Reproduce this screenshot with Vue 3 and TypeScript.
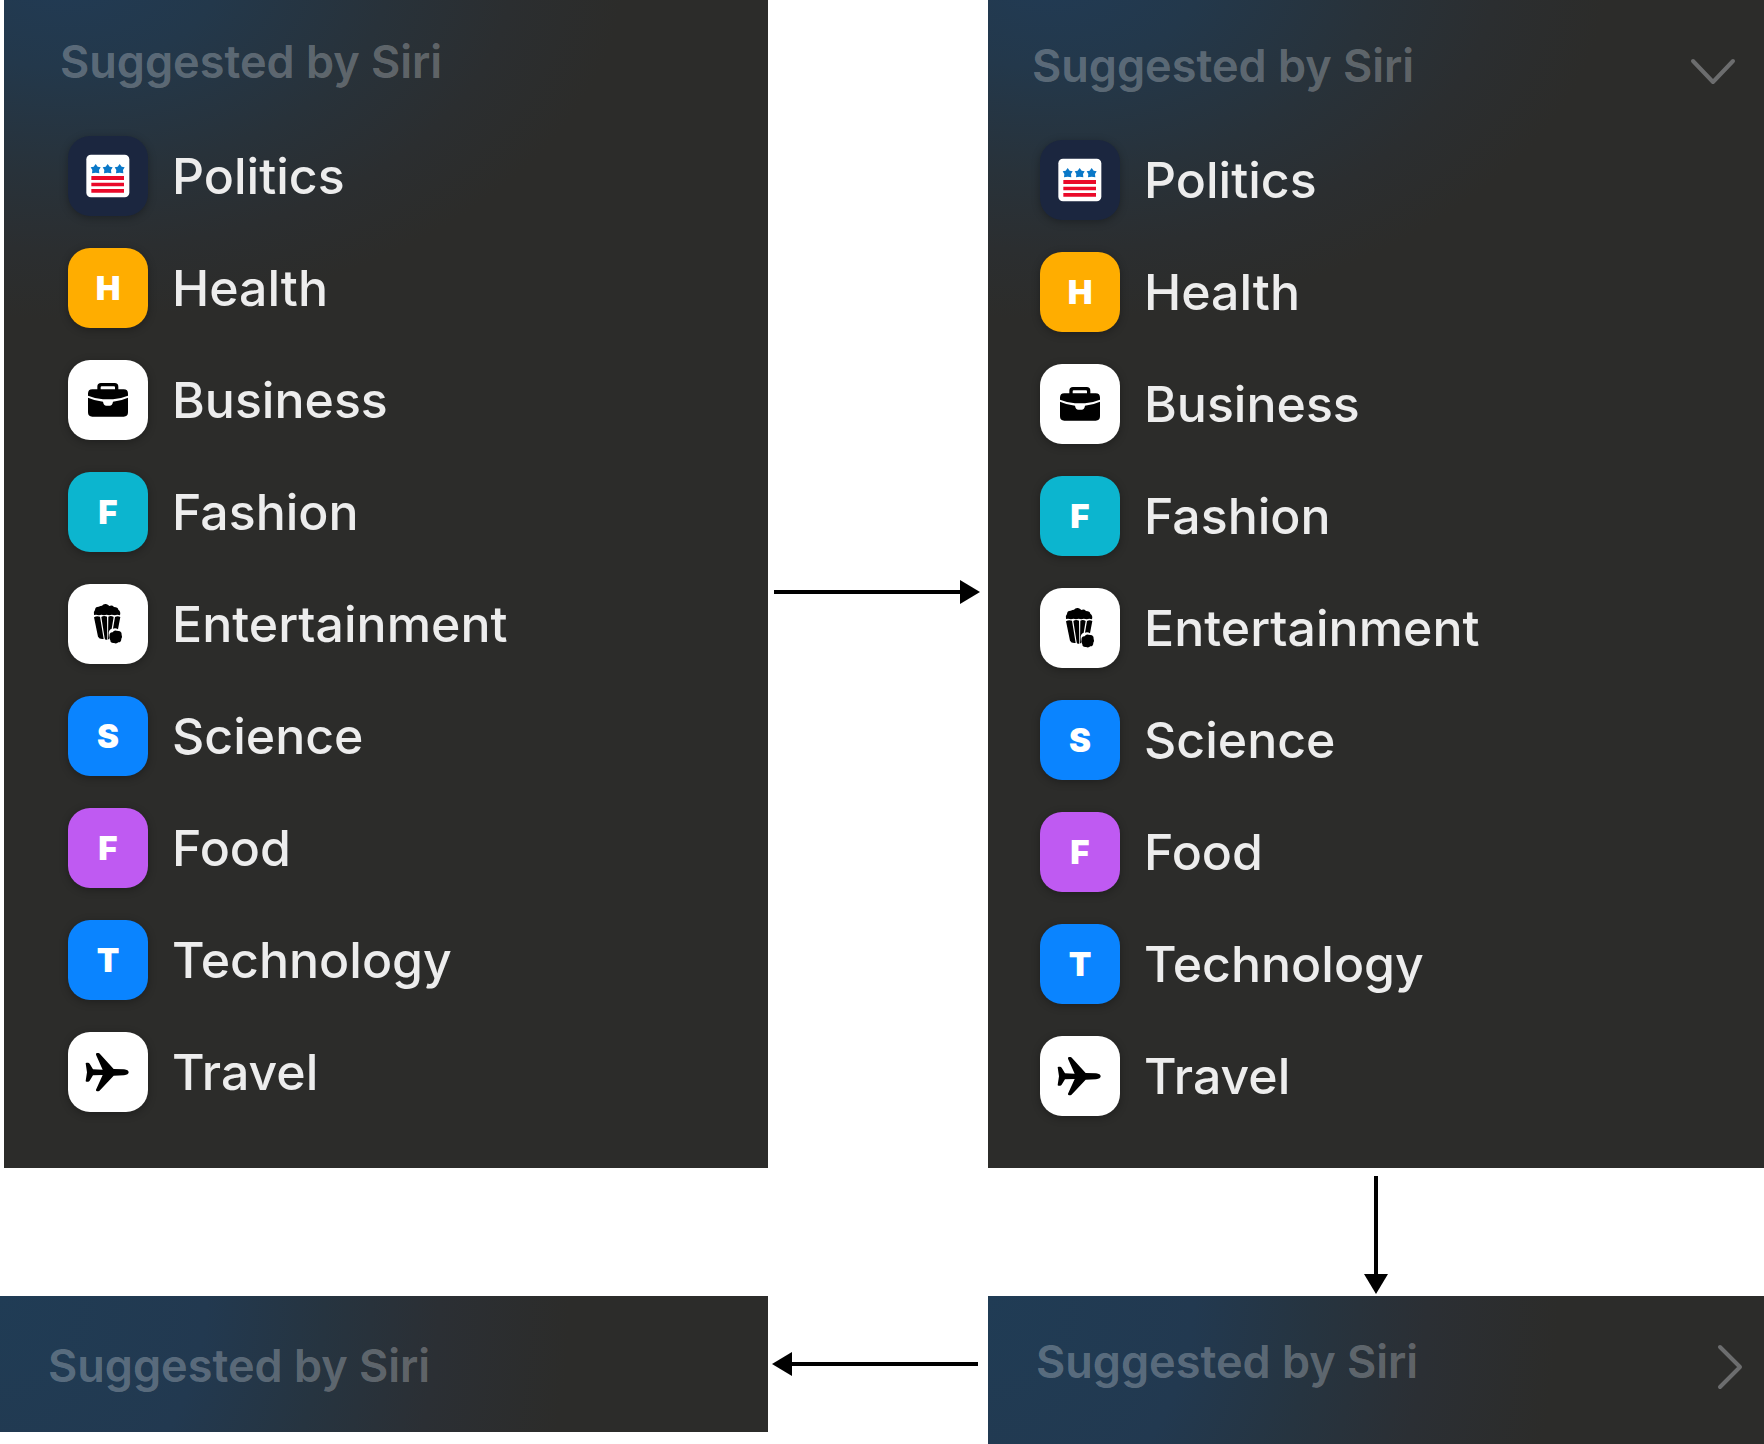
<script setup lang="ts">
import { ref } from 'vue'

interface Topic {
  name: string
  color: string
  letter?: string
  icon?: 'flag' | 'briefcase' | 'popcorn' | 'plane'
}

interface Panel {
  id: string
  open: boolean
  chevron?: 'down' | 'right'
}

const topics: Topic[] = [
  { name: 'Politics', color: '#1b263f', icon: 'flag' },
  { name: 'Health', color: '#ffad00', letter: 'H' },
  { name: 'Business', color: '#ffffff', icon: 'briefcase' },
  { name: 'Fashion', color: '#0cb5cf', letter: 'F' },
  { name: 'Entertainment', color: '#ffffff', icon: 'popcorn' },
  { name: 'Science', color: '#0a84ff', letter: 'S' },
  { name: 'Food', color: '#bf5af2', letter: 'F' },
  { name: 'Technology', color: '#0a84ff', letter: 'T' },
  { name: 'Travel', color: '#ffffff', icon: 'plane' },
]

const panels = ref<Panel[]>([
  { id: 'open-idle', open: true },
  { id: 'open-hover', open: true, chevron: 'down' },
  { id: 'closed-idle', open: false },
  { id: 'closed-hover', open: false, chevron: 'right' },
])
</script>

<template>
  <main class="board">
    <section
      v-for="panel in panels"
      :key="panel.id"
      class="panel"
      :class="[panel.id, { closed: !panel.open }]"
    >
      <header class="head">
        <h2 class="title">Suggested by Siri</h2>
        <button
          v-if="panel.chevron"
          class="toggle"
          type="button"
          :aria-expanded="panel.open"
          aria-label="Toggle suggestions"
        >
          <svg v-if="panel.chevron === 'down'" width="46" height="28" viewBox="0 0 46 28">
            <path d="M3 4 23 25 43 4" />
          </svg>
          <svg v-else width="28" height="48" viewBox="0 0 28 48">
            <path d="M4 4 24 24 4 44" />
          </svg>
        </button>
      </header>

      <ul v-if="panel.open" class="topics">
        <li v-for="topic in topics" :key="topic.name">
          <a class="topic" href="#">
            <span class="tile" :style="{ background: topic.color }">
              <template v-if="topic.letter">{{ topic.letter }}</template>
              <svg v-else viewBox="0 0 240 240" aria-hidden="true">
                <g v-if="topic.icon === 'flag'">
                  <rect x="55" y="56" width="129" height="128" rx="14" fill="#fff" />
                  <path
                    v-for="x in [83, 119, 155]"
                    :key="x"
                    :transform="`translate(${x} 99)`"
                    d="M0-15 6-7 15-5 10 3 11 13 0 11-11 13-10 3-15-5-6-7Z"
                    fill="#0a78c8"
                  />
                  <path d="M70 120h98v12H70zM70 140h98v11H70zM70 159h98v11H70z" fill="#ea0a2a" />
                </g>
                <g v-else-if="topic.icon === 'briefcase'">
                  <path
                    fill-rule="evenodd"
                    d="M60 107V101Q60 88 73 88H88V80Q88 69 99 69H140Q151 69 151 80V88H167Q180 88 180 101V107Q158 116 135 118H105Q82 116 60 107ZM98 88H141V82Q141 79 138 79H101Q98 79 98 82Z"
                  />
                  <path d="M60 113Q82 123 105 125 107 137 115 137H125Q133 137 135 125 158 123 180 113V157Q180 170 167 170H73Q60 170 60 157Z" />
                </g>
                <g v-else-if="topic.icon === 'popcorn'">
                  <path d="M78 93Q75 84 81 78 81 68 92 68 98 65 102 65 106 59 114 60 120 61 124 66 132 62 138 69 150 69 151 77 159 82 156 94 148 91 140 94 131 90 124 94 116 90 108 94 100 90 93 94 86 91 78 93Z" />
                  <path d="M78 100Q86 94 96 98L107 165Q94 167 90 158ZM100 99Q107 94 117 98L118 167Q111 169 110 163ZM121 98Q129 94 137 99L131 134Q121 138 122 150L123 166H120ZM141 99Q149 94 157 99L150 136Q143 131 135 134Z" />
                  <path d="M125 150Q127 144 134 145 138 137 146 140L156 142Q162 145 161 153 164 160 160 164 160 175 151 175 146 180 138 177 127 178 127 169 122 162 125 150Z" />
                </g>
                <path
                  v-else
                  d="M53 94Q53 92 56 92H60Q63 92 65 95L75 112 104 113 84 68Q83 64 87 63H91Q94 63 96 66L137 111 168 112Q182 114 182 121T168 130L137 131 96 175Q94 178 91 178H87Q83 177 84 173L104 129 75 130 65 146Q63 149 60 149H56Q53 149 53 147L57 121Z"
                />
              </svg>
            </span>
            <span>{{ topic.name }}</span>
          </a>
        </li>
      </ul>
    </section>

    <div class="arrow to-right" aria-hidden="true">
      <i class="shaft"></i>
      <svg width="20" height="24" viewBox="0 0 20 24"><path d="M0 0 20 12 0 24Z" /></svg>
    </div>
    <div class="arrow to-down" aria-hidden="true">
      <i class="shaft"></i>
      <svg width="24" height="20" viewBox="0 0 24 20"><path d="M0 0H24L12 20Z" /></svg>
    </div>
    <div class="arrow to-left" aria-hidden="true">
      <svg width="20" height="24" viewBox="0 0 20 24"><path d="M20 0 0 12 20 24Z" /></svg>
      <i class="shaft"></i>
    </div>
  </main>
</template>

<style>
body {
  margin: 0;
  background: #fff;
}
</style>

<style scoped>
.board {
  display: grid;
  grid-template-columns: 768fr 220fr 776fr;
  grid-template-rows: auto 128px auto;
  grid-template-areas:
    'open-idle right open-hover'
    '. . down'
    'closed-idle left closed-hover';
  font-family: Inter, 'Liberation Sans', sans-serif;
}

.panel {
  box-sizing: border-box;
  padding: 34px 28px 56px 56px;
  background: radial-gradient(
      ellipse 560px 350px at 60px -30px,
      #213b55 0%,
      #23384b 28%,
      #28323a 58%,
      #2b2e30 80%,
      #2c2c2a 100%
    )
    #2c2c2a;
}

.open-idle {
  grid-area: open-idle;
  margin-left: 4px;
}

.open-hover {
  grid-area: open-hover;
  padding: 38px 28px 52px 44px;
}

.closed {
  background: radial-gradient(
      ellipse 570px 640px at 0 0,
      #203c55 0%,
      #223950 36%,
      #263440 57%,
      #2b2f34 77%,
      #2c2c2a 100%
    )
    #2c2c2a;
}

.closed-idle {
  grid-area: closed-idle;
  align-self: start;
  padding: 42px 28px 38px 48px;
}

.closed-hover {
  grid-area: closed-hover;
  padding: 38px 20px 54px 48px;
}

.head {
  display: flex;
  align-items: center;
  justify-content: space-between;
  height: 56px;
}

.title {
  margin: 0;
  font-size: 45px;
  line-height: 56px;
  font-weight: 600;
  color: rgba(255, 255, 255, 0.27);
}

.toggle {
  display: flex;
  margin: 0;
  padding: 10px 0 0;
  border: 0;
  background: none;
}

.toggle path {
  fill: none;
  stroke: #6c6d6e;
  stroke-width: 4;
  stroke-linecap: round;
  stroke-linejoin: round;
}

.topics {
  display: flex;
  flex-direction: column;
  gap: 32px;
  margin: 46px 0 0;
  padding: 0 0 0 8px;
  list-style: none;
}

.topic {
  display: flex;
  align-items: center;
  gap: 24px;
  color: #ededed;
  font-size: 50px;
  line-height: 80px;
  font-weight: 500;
  text-decoration: none;
}

.tile {
  display: flex;
  align-items: center;
  justify-content: center;
  width: 80px;
  height: 80px;
  border-radius: 22px;
  color: #fff;
  font-size: 33px;
  font-weight: 900;
  box-shadow: 0 2px 8px rgba(0, 0, 0, 0.3);
}

.tile svg {
  width: 80px;
  height: 80px;
}

.arrow {
  display: flex;
  align-items: center;
}

.arrow svg {
  flex: none;
}

.shaft {
  flex: 1;
  height: 4px;
  background: #000;
}

.to-right {
  grid-area: right;
  padding: 16px 8px 0 6px;
}

.to-down {
  grid-area: down;
  flex-direction: column;
  padding: 8px 0 2px;
}

.to-down .shaft {
  width: 4px;
}

.to-left {
  grid-area: left;
  padding: 0 10px 12px 4px;
}
</style>
